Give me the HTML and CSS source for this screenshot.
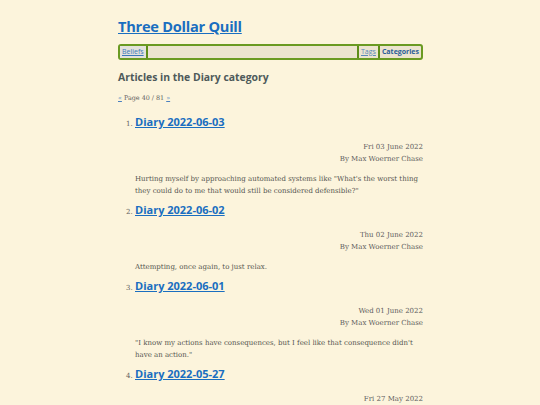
FILE: index.html
```html
<!DOCTYPE html>
<html>
<head>
<meta charset="utf-8">
<link rel="stylesheet" href="styles.css">
</head>
<body>
<div class="page">
  <header class="site-header">
    <h1 class="site-title"><a href="#">Three Dollar Quill</a></h1>
    <nav class="nav">
      <a class="nav-link nav-first" href="#">Beliefs</a>
      <span class="nav-spacer"></span>
      <a class="nav-link nav-tags" href="#">Tags</a>
      <a class="nav-link nav-current" href="#">Categories</a>
    </nav>
  </header>
  <main>
    <h2 class="cat-heading">Articles in the Diary category</h2>
    <p class="pager"><a href="#">«</a> Page 40 / 81 <a href="#">»</a></p>
    <ol class="articles">
      <li class="article">
        <h3 class="article-title"><a href="#">Diary 2022-06-03</a></h3>
        <div class="meta">
          <div>Fri 03 June 2022</div>
          <div>By Max Woerner Chase</div>
        </div>
        <p class="summary">Hurting myself by approaching automated systems like "What's the worst thing they could do to me that would still be considered defensible?"</p>
      </li>
      <li class="article">
        <h3 class="article-title"><a href="#">Diary 2022-06-02</a></h3>
        <div class="meta">
          <div>Thu 02 June 2022</div>
          <div>By Max Woerner Chase</div>
        </div>
        <p class="summary">Attempting, once again, to just relax.</p>
      </li>
      <li class="article">
        <h3 class="article-title"><a href="#">Diary 2022-06-01</a></h3>
        <div class="meta">
          <div>Wed 01 June 2022</div>
          <div>By Max Woerner Chase</div>
        </div>
        <p class="summary">"I know my actions have consequences, but I feel like that consequence didn't have an action."</p>
      </li>
      <li class="article">
        <h3 class="article-title"><a href="#">Diary 2022-05-27</a></h3>
        <div class="meta">
          <div>Fri 27 May 2022</div>
          <div>By Max Woerner Chase</div>
        </div>
        <p class="summary">More diary text.</p>
      </li>
    </ol>
  </main>
</div>
</body>
</html>
```
FILE: styles.css
```css
html, body {
  margin: 0;
  padding: 0;
  background: #fcf4dc;
}
body {
  font-family: "DejaVu Serif", serif;
  color: #555550;
  overflow: hidden;
  height: 405px;
}
.page {
  width: 305px;
  margin: 0 auto;
  padding-top: 15px;
  padding-left: 1px;
}
a { color: #1a6ec0; }
.site-title {
  margin: 0;
  font-family: "Open Sans", sans-serif;
  font-weight: 700;
  font-size: 14.6px;
  line-height: 22px;
  letter-spacing: -0.25px;
}
.site-title a { color: #1a6ec0; }
.nav {
  margin-top: 7px;
  display: flex;
  align-items: stretch;
  border: 2px solid #6a9a22;
  border-radius: 3px;
  background: #ece4cf;
  height: 12px;
  font-family: "Open Sans", sans-serif;
  font-size: 7px;
  line-height: 12px;
}
.nav-link {
  padding: 0 2px;
  color: #3a78b8;
}
.nav-first {
  background: #e3e2dc;
  border-right: 2px solid #5e8e18;
}
.nav-spacer { flex: 1; }
.nav-tags {
  border-left: 2px solid #5e8e18;
  border-right: 2px solid #5e8e18;
  color: #5a88b8;
}
.nav-current {
  font-weight: 700;
  text-decoration: none;
  color: #2a5d98;
}
.cat-heading {
  margin: 9px 0 0 0;
  font-family: "Open Sans", sans-serif;
  font-size: 10.4px;
  font-weight: 700;
  line-height: 16px;
  color: #4e5a5a;
}
.pager {
  margin: 8px 0 0 0;
  font-size: 6.4px;
  line-height: 10px;
  color: #606060;
}
.pager a { color: #4a80c0; }
.articles {
  margin: 10px 0 0 0;
  padding-left: 17px;
  font-size: 6px;
}
.article { color: #606060; }
.article::marker { font-size: 7px; }
.article-title {
  margin: 0;
  font-family: "Open Sans", sans-serif;
  font-size: 11px;
  font-weight: 700;
  line-height: 18px;
  display: inline;
}
.article-title a { color: #1a6ec0; }
.meta {
  text-align: right;
  font-size: 7px;
  line-height: 12px;
  margin-top: 10px;
  color: #5c5c5c;
}
.summary {
  margin: 8px 0 4px 0;
  font-size: 7px;
  line-height: 12px;
  color: #555550;
}
```
